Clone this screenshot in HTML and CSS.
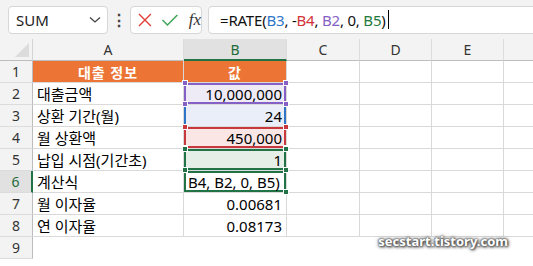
FILE: index.html
```html
<!DOCTYPE html>
<html lang="ko">
<head>
  <meta charset="UTF-8">
  <title>RATE 함수</title>
  <link rel="stylesheet" href="styles.css">
</head>
<body>
  <div class="toolbar">
    <div class="name-box">
      <span>SUM</span>
      <svg width="12" height="8" viewBox="0 0 12 8"><path d="M1 1.5 L6 6 L11 1.5" fill="none" stroke="#444" stroke-width="1.3"/></svg>
    </div>
    <div class="dots">⋮</div>
    <div class="fx-box">
      <svg width="16" height="16" viewBox="0 0 16 16"><path d="M2 2 L14 14 M14 2 L2 14" stroke="#e0403c" stroke-width="1.4"/></svg>
      <svg width="18" height="14" viewBox="0 0 18 14"><path d="M1.5 7 L6.5 12 L16.5 2" fill="none" stroke="#3ea45a" stroke-width="1.5"/></svg>
      <span class="fx"><i>fx</i></span>
    </div>
    <div class="formula-box"><span>=RATE(<span class="ref-blue">B3</span>, -<span class="ref-red">B4</span>, <span class="ref-purple">B2</span>, 0, <span class="ref-green">B5</span>)</span><span class="caret"></span></div>
  </div>

  <div class="sheet">
    <div class="corner"><span class="tri"></span></div>
    <div class="col-head">A</div>
    <div class="col-head active">B</div>
    <div class="col-head">C</div>
    <div class="col-head">D</div>
    <div class="col-head">E</div>
    <div class="col-head last"></div>

    <div class="row-head">1</div>
    <div class="cell title">대출 정보</div>
    <div class="cell title">값</div>
    <div class="cell"></div><div class="cell"></div><div class="cell"></div><div class="cell last"></div>

    <div class="row-head">2</div>
    <div class="cell">대출금액</div>
    <div class="cell num range purple">10,000,000<i class="h tl"></i><i class="h tr"></i><i class="h bl"></i><i class="h br"></i></div>
    <div class="cell"></div><div class="cell"></div><div class="cell"></div><div class="cell last"></div>

    <div class="row-head">3</div>
    <div class="cell">상환 기간(월)</div>
    <div class="cell num range blue">24</div>
    <div class="cell"></div><div class="cell"></div><div class="cell"></div><div class="cell last"></div>

    <div class="row-head">4</div>
    <div class="cell">월 상환액</div>
    <div class="cell num range red">450,000<i class="h tl"></i><i class="h tr"></i><i class="h bl"></i><i class="h br"></i></div>
    <div class="cell"></div><div class="cell"></div><div class="cell"></div><div class="cell last"></div>

    <div class="row-head">5</div>
    <div class="cell">납입 시점(기간초)</div>
    <div class="cell num range green">1<i class="h tl"></i><i class="h tr"></i><i class="h bl"></i><i class="h br"></i></div>
    <div class="cell"></div><div class="cell"></div><div class="cell"></div><div class="cell last"></div>

    <div class="row-head active">6</div>
    <div class="cell">계산식</div>
    <div class="cell editing">B4, B2, 0, B5)<i class="h br"></i></div>
    <div class="cell"></div><div class="cell"></div><div class="cell"></div><div class="cell last"></div>

    <div class="row-head">7</div>
    <div class="cell">월 이자율</div>
    <div class="cell num">0.00681</div>
    <div class="cell"></div><div class="cell"></div><div class="cell"></div><div class="cell last"></div>

    <div class="row-head">8</div>
    <div class="cell">연 이자율</div>
    <div class="cell num">0.08173</div>
    <div class="cell"></div><div class="cell"></div><div class="cell"></div><div class="cell last"></div>

    <div class="row-head">9</div>
    <div class="cell blank"></div>
    <div class="cell blank"></div>
    <div class="cell blank"></div><div class="cell blank"></div><div class="cell blank"></div><div class="cell blank last"></div>

    <div class="watermark">secstart.tistory.com</div>
  </div>
</body>
</html>
```

FILE: styles.css
```css
body {
  margin: 0;
  background: #ffffff;
  font-family: "Noto Sans", "Noto Sans CJK KR", sans-serif;
  color: #000000;
  overflow: hidden;
}

.toolbar {
  display: flex;
  align-items: center;
  height: 39px;
  padding-left: 8px;
  background: #f3f3f3;
  box-sizing: border-box;
}

.name-box {
  display: flex;
  align-items: center;
  justify-content: space-between;
  width: 100px;
  height: 28px;
  padding: 0 6px 0 7px;
  box-sizing: border-box;
  background: #ffffff;
  border: 1px solid #d6d6d6;
  border-radius: 4px;
  font-size: 15px;
  color: #222;
}

.dots {
  width: 22px;
  text-align: center;
  font-size: 16px;
  font-weight: bold;
  color: #444;
}

.fx-box {
  display: flex;
  align-items: center;
  gap: 8px;
  width: 72px;
  height: 28px;
  padding-left: 6px;
  box-sizing: border-box;
  background: #ffffff;
  border: 1px solid #d6d6d6;
  border-radius: 4px;
}

.fx {
  font-family: "Liberation Serif", serif;
  font-size: 17px;
  color: #333;
  margin-left: 2px;
}

.formula-box {
  flex: 1;
  display: flex;
  align-items: center;
  height: 28px;
  margin-left: 6px;
  margin-right: -10px;
  padding-left: 11px;
  box-sizing: border-box;
  background: #ffffff;
  border: 1px solid #d6d6d6;
  border-radius: 4px;
  font-size: 15px;
  letter-spacing: -0.2px;
  white-space: nowrap;
  color: #111;
}

.ref-blue { color: #2e75c8; }
.ref-red { color: #d13438; }
.ref-purple { color: #8661c5; }
.ref-green { color: #1e7a3c; }

.caret {
  display: inline-block;
  width: 1px;
  height: 19px;
  margin-left: 2px;
  background: #000;
}

.sheet {
  position: relative;
  display: grid;
  grid-template-columns: 33px 151px 103px 73px 72px 72px 1fr;
  grid-template-rows: 22px;
  grid-auto-rows: 22px;
  background: #f3f3f3;
}

.corner {
  position: relative;
  background: #f3f3f3;
  border-right: 1px solid #d4d4d4;
  border-bottom: 1px solid #bdbdbd;
}

.tri {
  position: absolute;
  right: 3px;
  bottom: 3px;
  width: 0;
  height: 0;
  border-left: 14px solid transparent;
  border-bottom: 14px solid #dcdcdc;
}

.col-head {
  display: flex;
  align-items: center;
  justify-content: center;
  font-size: 14px;
  color: #333;
  background: #f3f3f3;
  border-right: 1px solid #dcdcdc;
  border-bottom: 1px solid #bdbdbd;
}

.col-head.active {
  background: #e1e1e1;
  color: #1e6b3a;
  border-bottom: 2px solid #217346;
}

.col-head.last {
  border-right: none;
}

.row-head {
  display: flex;
  align-items: center;
  justify-content: center;
  font-size: 14px;
  color: #333;
  background: #f3f3f3;
  border-right: 1px solid #bdbdbd;
  border-bottom: 1px solid #dcdcdc;
}

.row-head.active {
  background: #e1e1e1;
  color: #1e6b3a;
  border-right: 2px solid #217346;
}

.cell {
  position: relative;
  display: flex;
  align-items: center;
  padding: 0 4px;
  box-sizing: border-box;
  font-size: 15px;
  background: #ffffff;
  border-right: 1px solid #d9d9d9;
  border-bottom: 1px solid #d9d9d9;
  white-space: nowrap;
  overflow: visible;
}

.cell.last {
  border-right: none;
}

.cell.blank {
  border-right: none;
  border-bottom: none;
}

.cell.title {
  justify-content: center;
  background: #ec7434;
  color: #ffffff;
  font-weight: bold;
  font-size: 14px;
  letter-spacing: 1px;
  border-right: 1px solid #d9d9d9;
}

.cell.num {
  justify-content: flex-end;
}

.range {
  box-shadow: inset 0 0 0 2px var(--ref);
}

.purple { --ref: #8661c5; background: #eeebf6; }
.blue { --ref: #2e75c8; background: #e9eef8; box-shadow: inset 2px 0 0 #2e75c8, inset -2px 0 0 #2e75c8; }
.red { --ref: #c8393d; background: #fbe6e6; }
.green { --ref: #217346; background: #e6efe7; }

.editing {
  box-shadow: inset 0 0 0 2px #217346;
}

.h {
  position: absolute;
  width: 6px;
  height: 6px;
  background: var(--ref, #217346);
  border: 1px solid #ffffff;
  box-sizing: border-box;
  z-index: 2;
}

.h.tl { left: -2px; top: -3px; }
.h.tr { right: -3px; top: -3px; }
.h.bl { left: -2px; bottom: -3px; }
.h.br { right: -3px; bottom: -3px; }

.watermark {
  position: absolute;
  right: 25px;
  bottom: 9px;
  font-family: "Noto Sans", sans-serif;
  font-weight: bold;
  font-size: 13px;
  color: #ffffff;
  text-shadow: 0 0 2px #555, 0 0 2px #555, 1px 1px 3px #333, 0 0 4px #666;
}
```
